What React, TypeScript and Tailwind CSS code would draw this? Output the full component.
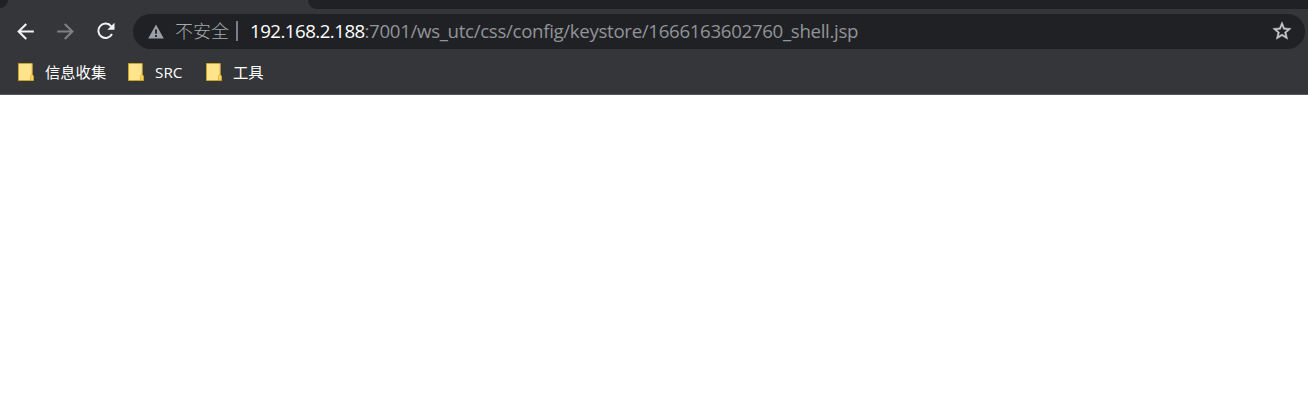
import type { ReactNode } from "react";

function TabStrip() {
  return (
    <div className="flex h-[9px] shrink-0">
      <div className="w-2 bg-[#35363a]">
        <div className="h-2 w-2 rounded-br-[8px] bg-[#202124]" />
      </div>
      <div className="w-[300px]" />
      <div className="flex-1 rounded-bl-[9px] bg-[#202124]" />
    </div>
  );
}

function IconButton({ label, children }: { label: string; children: ReactNode }) {
  return (
    <button aria-label={label} className="flex size-6 shrink-0 items-center justify-center">
      {children}
    </button>
  );
}

function AddressBar() {
  return (
    <div className="ml-4 flex h-[35px] w-[1172px] items-center rounded-full bg-[#202124] pl-[15px] pr-3 font-['Open_Sans','Noto_Sans_CJK_SC',sans-serif] text-[18.7px]">
      <svg className="h-[15px] w-4 shrink-0" viewBox="0 0 16 15" fill="#9aa0a6">
        <path fillRule="evenodd" d="M8 .5 15.8 14.5H.2ZM7.1 5.5v4.3h1.8V5.5ZM7.1 11.1v1.8h1.8v-1.8Z" />
      </svg>
      <span className="ml-[11px] w-[55px] whitespace-nowrap text-[18px] font-light leading-none text-[#a4aab0]">不安全</span>
      <span className="ml-[6px] h-5 w-[2px] bg-[#7b7e82]" />
      <span className="ml-3 flex leading-6">
        <span className="w-[114.5px] whitespace-nowrap tracking-[-0.53px] text-white">192.168.2.188</span>
        <span className="whitespace-nowrap tracking-[-0.33px] text-[#919498]">:7001/ws_utc/css/config/keystore/1666163602760_shell.jsp</span>
      </span>
      <svg className="ml-auto size-[22px] shrink-0" viewBox="0 0 24 24" fill="#c8c9cb" stroke="#c8c9cb" strokeWidth="0.5">
        <path d="M22 9.24l-7.19-.62L12 2 9.19 8.63 2 9.24l5.46 4.73L5.82 21 12 17.27 18.18 21l-1.63-7.03L22 9.24zM12 15.4l-3.76 2.27 1-4.28-3.32-2.88 4.38-.38L12 6.1l1.71 4.04 4.38.38-3.32 2.88 1 4.28L12 15.4z" />
      </svg>
    </div>
  );
}

function Toolbar() {
  return (
    <div className="flex h-11 shrink-0 items-center pl-[13px]">
      <IconButton label="Back">
        <svg className="size-[25px] shrink-0" viewBox="0 0 24 24" fill="#f1f2f3">
          <path d="M20 11H7.83l5.59-5.59L12 4l-8 8 8 8 1.41-1.41L7.83 13H20v-2z" />
        </svg>
      </IconButton>
      <div className="ml-4 flex">
        <IconButton label="Forward">
          <svg className="size-[25px] shrink-0" viewBox="0 0 24 24" fill="#7f8083">
            <path d="M12 4l-1.41 1.41L16.17 11H4v2h12.17l-5.58 5.59L12 20l8-8z" />
          </svg>
        </IconButton>
      </div>
      <div className="ml-4 flex">
        <IconButton label="Reload">
          <svg className="size-6" viewBox="0 0 24 24" fill="none">
            <path d="M18.2 7.3A7.2 7.2 0 1 0 19 15" stroke="#f1f2f3" strokeWidth="2" />
            <path d="M21.5 3.8v7h-7.2Z" fill="#f1f2f3" />
          </svg>
        </IconButton>
      </div>
      <AddressBar />
    </div>
  );
}

function Bookmark({ label, width }: { label: string; width: string }) {
  return (
    <div className={`flex items-center ${width}`}>
      <svg className="h-[18px] w-4 shrink-0" viewBox="0 0 16 18">
        <path d="M.5.5h13.7v11.2l1.3 1.2v4.6H.5Z" fill="#ffe48b" stroke="#c9a52c" />
        <path d="M12.5 17v-3.5q0-1.7 1.8-1.7" fill="none" stroke="#e2b93b" />
        <path d="M13 13h2v4h-2Z" fill="#f8d25c" />
      </svg>
      <span className="ml-[11px] whitespace-nowrap">{label}</span>
    </div>
  );
}

function BookmarksBar() {
  return (
    <div className="flex h-[42px] shrink-0 border-b border-[#57585c] pb-[3px] pl-[18px] font-['Open_Sans','Noto_Sans_CJK_SC',sans-serif] text-[15.3px] leading-5 text-white">
      <Bookmark label="信息收集" width="w-[110px]" />
      <Bookmark label="SRC" width="w-[78px]" />
      <Bookmark label="工具" width="w-[80px]" />
    </div>
  );
}

export default function App() {
  return (
    <div className="flex h-[407px] w-[1308px] flex-col overflow-hidden bg-white">
      <header className="flex flex-col bg-[#35363a]">
        <TabStrip />
        <Toolbar />
        <BookmarksBar />
      </header>
      <main className="flex-1 bg-white" />
    </div>
  );
}
